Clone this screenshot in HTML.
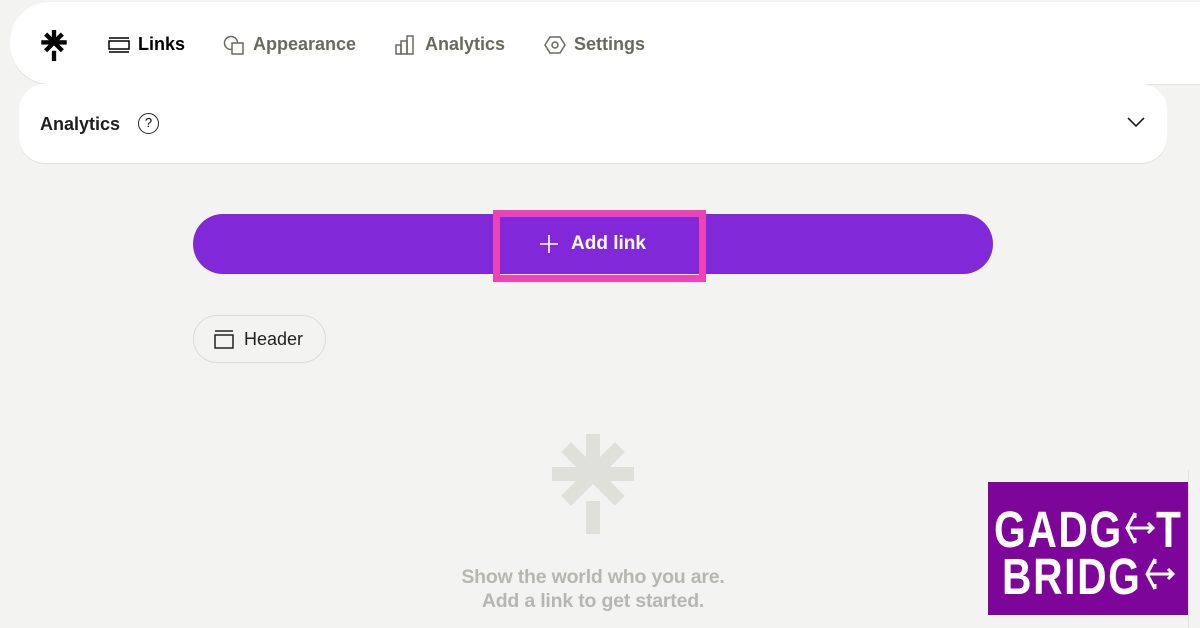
<!DOCTYPE html>
<html><head><style>
*{margin:0;padding:0;box-sizing:border-box}
body{width:1200px;height:628px;background:#f3f3f1;font-family:"Liberation Sans",sans-serif;position:relative;overflow:hidden}
.nav{position:absolute;left:10px;top:2px;width:1210px;height:82px;background:#fff;border-radius:40px 0 0 40px;box-shadow:0 1px 0 #e3e3df}
.ni{position:absolute;top:32px;font-size:18px;color:#676b5f;font-weight:bold;display:flex;align-items:center;gap:8px}
.card{position:absolute;left:19px;top:84px;width:1148px;height:79px;background:#fff;border-radius:26px;box-shadow:0 1px 0 #e0e0dc}
.btn{position:absolute;left:193px;top:214px;width:800px;height:60px;background:#8129d9;border-radius:30px}
.pink{position:absolute;left:493px;top:210px;width:213px;height:72px;border:7px solid #ec44b8}
.chip{position:absolute;left:193px;top:315px;width:133px;height:48px;border:1px solid #dcdcd6;border-radius:24px;font-size:18px;color:#222;display:flex;align-items:center;padding-left:20px;gap:10px}
.empty{position:absolute;left:0;width:1186px;text-align:center;font-size:19.5px;font-weight:bold;color:#b6b7b0;letter-spacing:-0.2px}
.gb{position:absolute;left:988px;top:482px;width:200px;height:133px;background:#7e0599}
.gt{position:absolute;color:#fff;font-weight:bold;font-size:51px;line-height:51px;transform-origin:0 0;transform:scaleX(0.8);white-space:nowrap;letter-spacing:2px}
</style></head><body>
<div class="nav">
<svg style="position:absolute;left:31px;top:28px" width="26" height="31" viewBox="0 0 82 100"><g fill="#000"><rect x="34" y="0" width="14" height="46"/><rect x="0" y="33" width="82" height="14"/><rect x="3" y="33" width="76" height="14" transform="rotate(45 41 40)"/><rect x="3" y="33" width="76" height="14" transform="rotate(-45 41 40)"/><rect x="34" y="67" width="14" height="33"/></g></svg>
<div class="ni" style="left:98px;color:#000"><svg width="22" height="16"><rect x="1" y="4" width="20" height="8" fill="none" stroke="#000" stroke-width="1.5"/><line x1="1" y1="1" x2="21" y2="1" stroke="#000" stroke-width="1.5"/><line x1="1" y1="15" x2="21" y2="15" stroke="#000" stroke-width="1.5"/></svg>Links</div>
<div class="ni" style="left:213px"><svg width="22" height="20"><circle cx="8" cy="8" r="6.5" fill="none" stroke="#676b5f" stroke-width="1.5"/><rect x="9" y="8" width="11" height="11" fill="#fff" stroke="#676b5f" stroke-width="1.5"/></svg>Appearance</div>
<div class="ni" style="left:385px"><svg width="22" height="20"><rect x="1" y="10" width="5" height="9" fill="none" stroke="#676b5f" stroke-width="1.5"/><rect x="6" y="6" width="6" height="13" fill="none" stroke="#676b5f" stroke-width="1.5"/><rect x="12" y="1" width="6" height="18" fill="none" stroke="#676b5f" stroke-width="1.5"/></svg>Analytics</div>
<div class="ni" style="left:534px"><svg width="22" height="20"><polygon points="6,2 16,2 21,10 16,18 6,18 1,10" fill="none" stroke="#676b5f" stroke-width="1.5"/><circle cx="11" cy="10" r="3" fill="none" stroke="#676b5f" stroke-width="1.5"/></svg>Settings</div>
</div>
<div class="card">
<div style="position:absolute;left:21px;top:30px;font-size:18px;color:#1e1e1e;font-weight:bold">Analytics</div>
<div style="position:absolute;left:119px;top:29px;width:21px;height:21px;border:1.5px solid #222;border-radius:50%;font-size:13px;text-align:center;line-height:18px">?</div>
<svg style="position:absolute;left:1108px;top:32px" width="18" height="12"><polyline points="1,2 9,10 17,2" fill="none" stroke="#222" stroke-width="1.6"/></svg>
</div>
<div class="btn"></div>
<div class="pink"></div>
<div style="position:absolute;left:539px;top:233px;color:#fff;font-size:19px;font-weight:bold;display:flex;align-items:center;gap:12px"><svg width="20" height="20"><line x1="10" y1="1" x2="10" y2="19" stroke="#fff" stroke-width="1.6"/><line x1="1" y1="10" x2="19" y2="10" stroke="#fff" stroke-width="1.6"/></svg>Add link</div>
<div class="chip"><svg width="20" height="20"><line x1="1" y1="2" x2="19" y2="2" stroke="#222" stroke-width="1.5"/><rect x="1" y="6" width="18" height="13" fill="none" stroke="#222" stroke-width="1.5"/></svg>Header</div>
<svg style="position:absolute;left:552px;top:434px" width="82" height="100" viewBox="0 0 82 100"><g fill="#dfe0da"><rect x="34" y="0" width="14" height="46"/><rect x="0" y="33" width="82" height="14"/><rect x="3" y="33" width="76" height="14" transform="rotate(45 41 40)"/><rect x="3" y="33" width="76" height="14" transform="rotate(-45 41 40)"/><rect x="34" y="67" width="14" height="33"/></g></svg>
<div class="empty" style="top:566px">Show the world who you are.</div>
<div class="empty" style="top:590px">Add a link to get started.</div>
<div style="position:absolute;left:1188px;top:470px;width:1px;height:158px;background:#e2e2de"></div>
<div class="gb">
<div class="gt" style="left:6px;top:22px">GADG</div>
<div class="gt" style="left:168px;top:22px">T</div>
<div class="gt" style="left:14px;top:69px">BRIDG</div>
<svg style="position:absolute;left:136px;top:28px" width="32" height="36" viewBox="0 0 30 36"><g fill="none" stroke="#fff" stroke-width="3"><polyline points="10,3 2,18 10,33"/><line x1="2" y1="18" x2="28" y2="18"/><polyline points="23,13 28,18 23,23"/><polyline points="10,3 10,8"/><polyline points="10,33 10,28"/></g></svg>
<svg style="position:absolute;left:156px;top:74px" width="32" height="36" viewBox="0 0 30 36"><g fill="none" stroke="#fff" stroke-width="3"><polyline points="10,3 2,18 10,33"/><line x1="2" y1="18" x2="28" y2="18"/><polyline points="23,13 28,18 23,23"/><polyline points="10,3 10,8"/><polyline points="10,33 10,28"/></g></svg>
</div>
</body></html>
